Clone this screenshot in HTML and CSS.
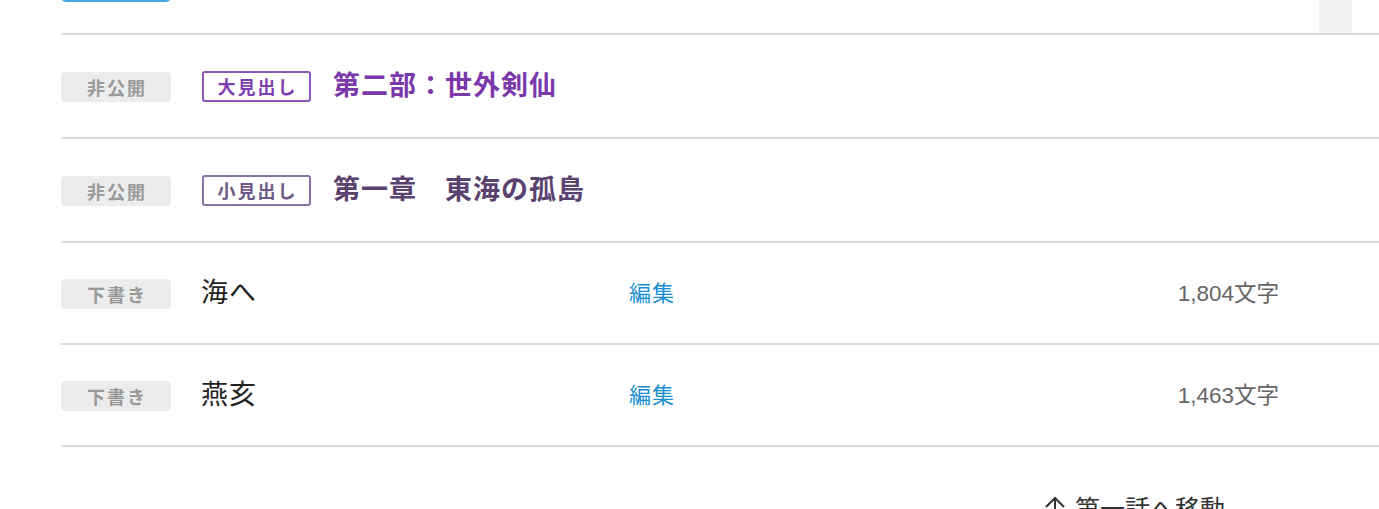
FILE: index.html
```html
<!DOCTYPE html>
<html lang="ja">
<head>
<meta charset="utf-8">
<link rel="stylesheet" href="styles.css">
</head>
<body>
<div class="page">
  <div class="list">
    <div class="row row-top">
      <div class="btn-top"></div>
      <div class="handle"></div>
    </div>
    <div class="row row-head">
      <span class="badge">非公開</span>
      <span class="tag tag-big">大見出し</span>
      <span class="head head-big">第二部：世外剣仙</span>
    </div>
    <div class="row row-head">
      <span class="badge">非公開</span>
      <span class="tag tag-small">小見出し</span>
      <span class="head head-small">第一章　東海の孤島</span>
    </div>
    <div class="row row-ep">
      <span class="badge">下書き</span>
      <span class="ep-title">海へ</span>
      <a class="edit">編集</a>
      <span class="count">1,804文字</span>
    </div>
    <div class="row row-ep">
      <span class="badge">下書き</span>
      <span class="ep-title">燕亥</span>
      <a class="edit">編集</a>
      <span class="count">1,463文字</span>
    </div>
  </div>
  <div class="footer">
    <a class="to-first">
      <svg class="arrow" width="24" height="24" viewBox="0 0 24 24" fill="none" stroke="#333" stroke-width="2"><path d="M3 12 L12 3 L21 12 M12 3 V24"/></svg>
      第一話へ移動
    </a>
  </div>
</div>
</body>
</html>
```
FILE: styles.css
```css
html, body {
  margin: 0;
  padding: 0;
  background: #fff;
  overflow: hidden;
}
body {
  font-family: "Noto Sans CJK JP", "Liberation Sans", sans-serif;
  color: #222;
}
.page {
  padding-left: 61px;
  width: 1318px;
  height: 509px;
}
.list {
  display: flex;
  flex-direction: column;
}
.row {
  display: flex;
  align-items: center;
  border-bottom: 2px solid #dcdcdc;
}
.row-top {
  height: 33px;
  align-items: flex-start;
}
.btn-top {
  width: 110px;
  height: 40px;
  margin-top: -38px;
  background: #4aa8e0;
  border-radius: 5px;
}
.handle {
  margin-left: auto;
  margin-right: 27px;
  width: 33px;
  height: 33px;
  background: #f5f4f2;
}
.row-head {
  height: 102px;
}
.row-ep {
  height: 100px;
}
.badge {
  flex: none;
  width: 110px;
  height: 30px;
  margin-top: 2px;
  box-sizing: border-box;
  background: #ececec;
  border-radius: 4px;
  color: #999;
  font-weight: bold;
  font-size: 18px;
  letter-spacing: 2px;
  padding-left: 2px;
  display: flex;
  align-items: center;
  justify-content: center;
}
.tag {
  flex: none;
  margin-left: 31px;
  width: 109px;
  height: 31px;
  box-sizing: border-box;
  border-radius: 3px;
  font-weight: bold;
  font-size: 18px;
  letter-spacing: 2px;
  padding-left: 2px;
  display: flex;
  align-items: center;
  justify-content: center;
}
.tag-big {
  border: 2px solid #8c56bb;
  color: #7f3fae;
}
.tag-small {
  border: 2px solid #8a72a6;
  color: #6f5888;
}
.head {
  margin-left: 22px;
  margin-bottom: 5px;
  font-weight: bold;
  font-size: 27px;
  letter-spacing: 1px;
}
.head-big {
  color: #7a38ab;
}
.head-small {
  color: #5a4270;
}
.ep-title {
  margin-left: 30px;
  margin-bottom: 5px;
  width: 428px;
  font-size: 27px;
  letter-spacing: 1px;
  color: #222;
}
.edit {
  color: #1a8fd0;
  font-size: 22px;
  letter-spacing: 1px;
  margin-bottom: 5px;
}
.count {
  margin-left: auto;
  margin-right: 100px;
  margin-bottom: 5px;
  color: #666;
  font-family: "Liberation Sans", "Noto Sans CJK JP", sans-serif;
  font-size: 22.5px;
}
.footer {
  display: flex;
  justify-content: flex-end;
  padding-top: 42px;
  padding-right: 154px;
}
.to-first {
  display: flex;
  align-items: center;
  gap: 8px;
  color: #333;
  font-size: 25px;
}
.arrow {
  flex: none;
}
```
